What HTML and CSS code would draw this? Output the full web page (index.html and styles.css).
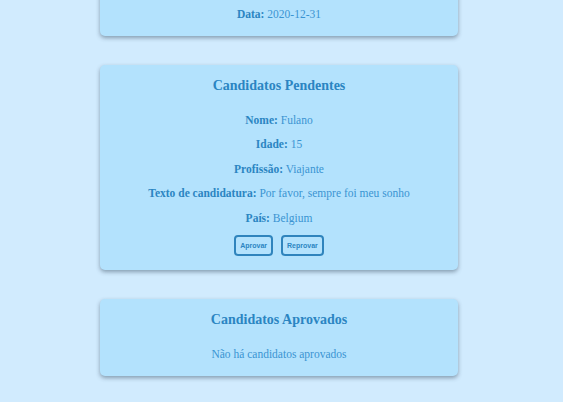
FILE: index.html
```html
<!DOCTYPE html>
<html lang="pt">
<head>
<meta charset="utf-8">
<link rel="stylesheet" href="styles.css">
</head>
<body>
<main class="list">
  <section class="card card-first">
    <p class="row"><b>Data:</b> 2020-12-31</p>
  </section>
  <section class="card">
    <h3 class="title">Candidatos Pendentes</h3>
    <p class="row"><b>Nome:</b> Fulano</p>
    <p class="row"><b>Idade:</b> 15</p>
    <p class="row"><b>Profissão:</b> Viajante</p>
    <p class="row"><b>Texto de candidatura:</b> Por favor, sempre foi meu sonho</p>
    <p class="row"><b>País:</b> Belgium</p>
    <div class="actions">
      <button class="btn">Aprovar</button>
      <button class="btn">Reprovar</button>
    </div>
  </section>
  <section class="card">
    <h3 class="title">Candidatos Aprovados</h3>
    <p class="row">Não há candidatos aprovados</p>
  </section>
</main>
</body>
</html>
```
FILE: styles.css
```css
html, body {
  margin: 0;
  padding: 0;
  background: #d1ebfe;
  height: 100%;
  overflow: hidden;
}
body {
  font-family: "Liberation Serif", "Times New Roman", serif;
  color: #3a94d2;
}
.list {
  width: 358px;
  margin: -33px 0 0 100px;
  display: flex;
  flex-direction: column;
  gap: 29px;
}
.card {
  background: #b3e2fd;
  border-radius: 5px;
  box-shadow: 0 2px 4px rgba(40, 60, 80, 0.45);
  text-align: center;
  padding: 5px 12px 14px;
}
.card-first {
  padding-top: 40px;
}
.title {
  margin: 8px 0 19px;
  font-size: 14px;
  line-height: 16px;
  font-weight: bold;
  color: #2b85c2;
}
.row {
  margin: 0 0 10px;
  font-size: 11.5px;
  line-height: 14.5px;
}
.row:last-child {
  margin-bottom: 0;
}
.row b {
  color: #2b85c2;
}
.actions {
  display: flex;
  justify-content: center;
  gap: 8px;
  margin-top: 4px;
}
.btn {
  font-family: "Liberation Sans", Arial, sans-serif;
  font-size: 7px;
  font-weight: bold;
  color: #2b85c2;
  background: transparent;
  border: 2px solid #2f84bd;
  border-radius: 4px;
  height: 21px;
  padding: 0 4px;
}
```
